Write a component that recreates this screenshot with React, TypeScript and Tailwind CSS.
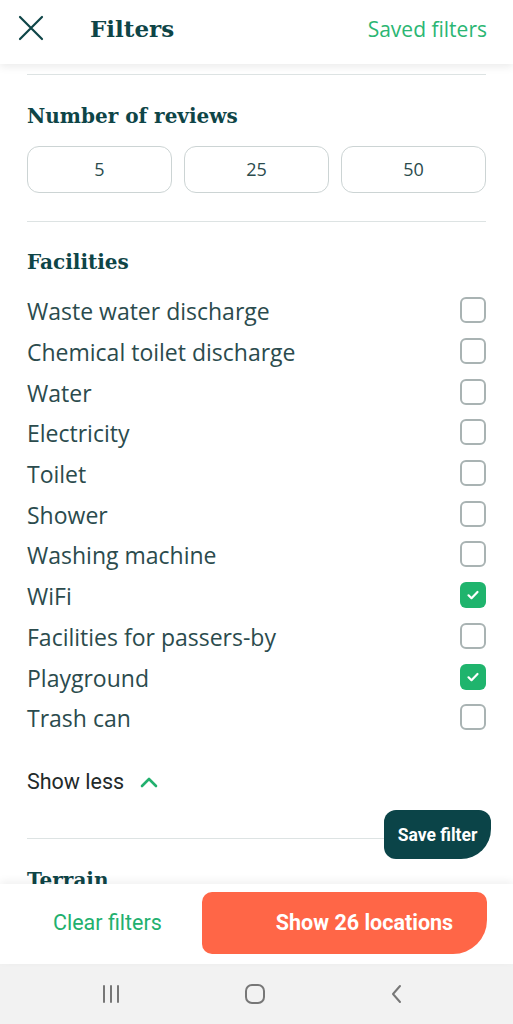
const facilities = [
  { label: 'Waste water discharge', checked: false },
  { label: 'Chemical toilet discharge', checked: false },
  { label: 'Water', checked: false },
  { label: 'Electricity', checked: false },
  { label: 'Toilet', checked: false },
  { label: 'Shower', checked: false },
  { label: 'Washing machine', checked: false },
  { label: 'WiFi', checked: true },
  { label: 'Facilities for passers-by', checked: false },
  { label: 'Playground', checked: true },
  { label: 'Trash can', checked: false },
]

const Checkbox = ({ checked }: { checked: boolean }) => {
  if (checked) {
    return (
      <div className="w-[26px] h-[26px] rounded-[6px] bg-[#1fb46d] flex items-center justify-center">
        <svg width="14" height="14" viewBox="0 0 14 14" fill="none">
          <path d="M2.5 7.3l3 2.9 6-6.2" stroke="white" strokeWidth="2.2" strokeLinecap="round" strokeLinejoin="round" />
        </svg>
      </div>
    )
  }
  return <div className="w-[26px] h-[26px] rounded-[6px] border-2 border-[#a9b3b3] bg-white" />
}

const Divider = () => <div className="h-px bg-[#dde3e3]" />

const App = () => {
  return (
    <div className="h-[1024px] w-[513px] flex flex-col bg-white overflow-hidden" style={{ fontFamily: 'Roboto, sans-serif' }}>
      {/* header */}
      <header className="relative z-10 h-16 shrink-0 bg-white flex items-center px-[18px] pb-[8px] shadow-[0_3px_8px_rgba(0,0,0,0.08)]">
        <svg width="26" height="26" viewBox="0 0 26 26" fill="none">
          <path d="M2 2l22 22M24 2L2 24" stroke="#0e4547" strokeWidth="2.2" strokeLinecap="round" />
        </svg>
        <h1 className="ml-[46px] text-[23px] font-bold text-[#0e4547] leading-none" style={{ fontFamily: '"DejaVu Serif", serif' }}>
          Filters
        </h1>
        <span className="ml-auto mr-[8px] text-[21px] text-[#2bb673] mt-[3px]" style={{ fontFamily: '"Open Sans", sans-serif' }}>
          Saved filters
        </span>
      </header>

      {/* scroll content */}
      <main className="relative flex-1 overflow-hidden px-[27px] pt-[10px]">
        <Divider />
        <h2 className="mt-[27px] text-[20px] leading-[28px] font-bold text-[#0e4547]" style={{ fontFamily: '"DejaVu Serif", serif' }}>
          Number of reviews
        </h2>
        <div className="mt-[16px] grid grid-cols-3 gap-3">
          {['5', '25', '50'].map((n) => (
            <button key={n} className="h-[47px] rounded-[12px] border border-[#ccd4d4] text-[18px] text-[#2b4b4d]" style={{ fontFamily: '"Open Sans", sans-serif' }}>
              {n}
            </button>
          ))}
        </div>
        <div className="mt-[28px]">
          <Divider />
        </div>
        <h2 className="mt-[26px] text-[20px] leading-[28px] font-bold text-[#0e4547]" style={{ fontFamily: '"DejaVu Serif", serif' }}>
          Facilities
        </h2>
        <ul className="mt-[14px]">
          {facilities.map((f) => (
            <li key={f.label} className="h-[40.7px] flex items-center justify-between">
              <span className="text-[23px] leading-[30px] pt-[2px] text-[#2b4b4d]" style={{ fontFamily: '"Open Sans", sans-serif' }}>
                {f.label}
              </span>
              <Checkbox checked={f.checked} />
            </li>
          ))}
        </ul>
        <div className="mt-[30px] flex items-center gap-[16px]">
          <span className="text-[21.5px] leading-[28px] text-[#1f2a2a]">Show less</span>
          <svg width="18" height="12" viewBox="0 0 18 12" fill="none">
            <path d="M2 10l7-7 7 7" stroke="#22b06e" strokeWidth="2.6" strokeLinecap="round" strokeLinejoin="round" />
          </svg>
        </div>
        <div className="mt-[42px]">
          <Divider />
        </div>
        <h2 className="mt-[27px] text-[20px] leading-[28px] font-bold text-[#0e4547]" style={{ fontFamily: '"DejaVu Serif", serif' }}>
          Terrain
        </h2>

        <button className="absolute left-[384px] top-[746px] w-[107px] h-[49px] bg-[#0b4448] text-white text-[17.5px] font-bold rounded-tl-[12px] rounded-tr-[12px] rounded-bl-[12px] rounded-br-[30px] flex items-center justify-center pt-[2px]">
          Save filter
        </button>
      </main>

      {/* footer */}
      <footer className="relative z-10 h-20 shrink-0 bg-white flex items-start pt-[8px] pl-[53px] pr-[26px] shadow-[0_-3px_8px_rgba(0,0,0,0.06)]">
        <button className="h-[62px] text-[21.5px] text-[#22b06e]">Clear filters</button>
        <button className="ml-auto w-[285px] h-[62px] pl-[40px] bg-[#ff6647] text-white text-[21.5px] font-bold rounded-tl-[10px] rounded-tr-[10px] rounded-bl-[10px] rounded-br-[34px] flex items-center justify-center">
          Show 26 locations
        </button>
      </footer>

      {/* android nav */}
      <nav className="h-[60px] shrink-0 bg-[#f2f2f2] flex items-center pl-[101px] gap-[123px]">
        <svg width="20" height="20" viewBox="0 0 20 20" fill="none">
          <path d="M3 2v16M10 2v16M17 2v16" stroke="#777" strokeWidth="2" strokeLinecap="round" />
        </svg>
        <svg width="22" height="22" viewBox="0 0 22 22" fill="none">
          <rect x="2" y="2" width="18" height="18" rx="6" stroke="#777" strokeWidth="2" />
        </svg>
        <svg width="16" height="22" viewBox="0 0 16 22" fill="none">
          <path d="M11 3l-7 8 7 8" stroke="#777" strokeWidth="2" strokeLinecap="round" strokeLinejoin="round" />
        </svg>
      </nav>
    </div>
  )
}

export default App
